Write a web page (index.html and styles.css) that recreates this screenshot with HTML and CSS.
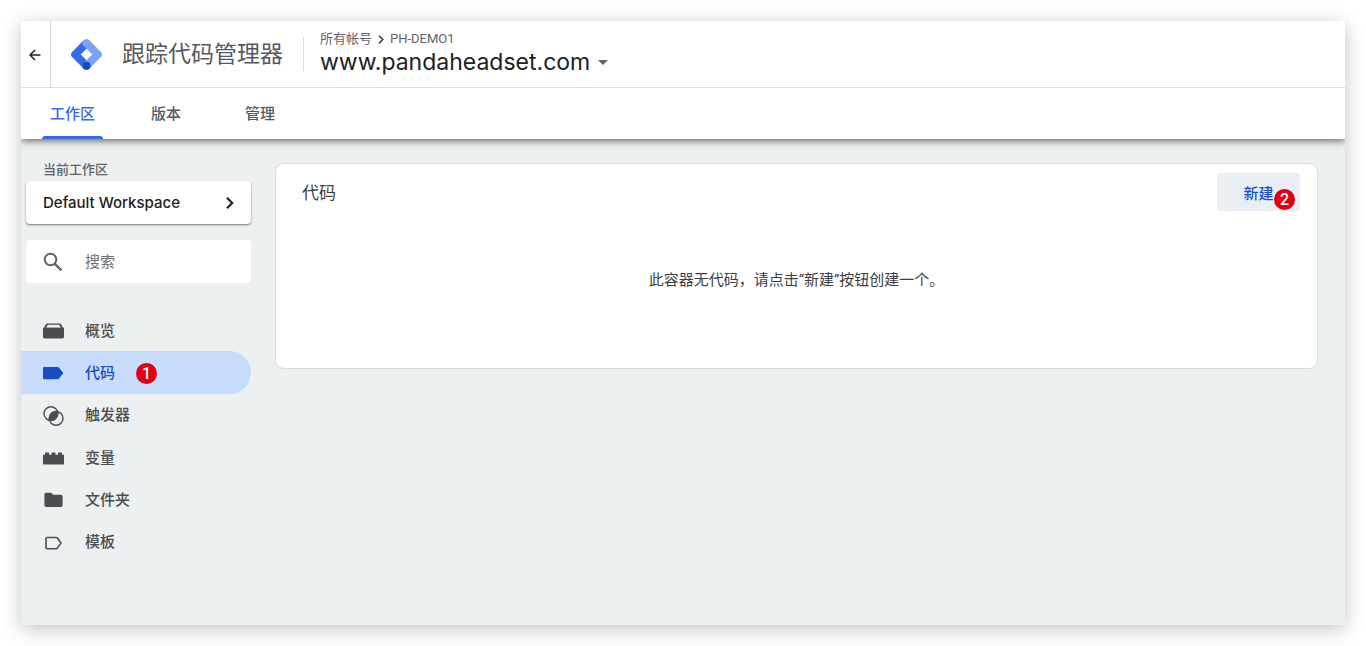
FILE: index.html
```
<!DOCTYPE html>
<html lang="zh-CN">
<head>
  <meta charset="UTF-8" />
  <title>跟踪代码管理器</title>
  <meta name="viewport" content="width=device-width, initial-scale=1.0" />
  <link rel="stylesheet" href="styles.css">
</head>
<body>

  <div class="app">
    <header class="header">
      <button class="back" type="button" aria-label="返回">
        <svg width="12" height="12" viewBox="0 0 12 12" fill="none" stroke="#202124" stroke-width="1.5"><path d="M11.5 6H1.2M6 1 1 6l5 5"/></svg>
      </button>
      <div class="brand">
        <svg class="logo" width="31" height="31" viewBox="0 0 32 32" fill="none" stroke-width="8.2" stroke-linejoin="round">
          <path d="M16 27.7 4.3 16 16 4.3" stroke="#356ae6"/>
          <path d="M16 4.3 27.7 16 16 27.7" stroke="#7ba2f3" stroke-linecap="round"/>
          <circle cx="16" cy="27.7" r="4.1" fill="#1a4bb8"/>
        </svg>
        <span class="brand-name">跟踪代码管理器</span>
      </div>
      <div class="container-info">
        <div class="crumbs">
          <a href="#">所有帐号</a>
          <svg width="6" height="9" viewBox="0 0 6 9" fill="none" stroke="#3c4043" stroke-width="1.6"><path d="M1 .8 4.8 4.5 1 8.2"/></svg>
          <a href="#">PH-DEMO1</a>
        </div>
        <button class="container-name" type="button">
          www.pandaheadset.com
          <svg width="10" height="5" viewBox="0 0 10 5"><path d="M0 0h10L5 5z" fill="#5f6368"/></svg>
        </button>
      </div>
    </header>

    <nav class="tabs">
      <a class="tab active" href="#">工作区</a>
      <a class="tab" href="#">版本</a>
      <a class="tab" href="#">管理</a>
    </nav>

    <div class="content">
      <aside class="sidebar">
        <div class="sidebar-label">当前工作区</div>
        <button class="workspace" type="button">
          Default Workspace
          <svg width="8" height="12" viewBox="0 0 8 12" fill="none" stroke="#202124" stroke-width="2.2"><path d="M1 .8 6.2 6 1 11.2"/></svg>
        </button>

        <label class="search">
          <svg width="20" height="20" viewBox="0 0 20 20" fill="none" stroke="#5f6368" stroke-width="2"><circle cx="7.5" cy="7.5" r="5.8"/><path d="m11.6 11.6 6.8 6.8" stroke-width="2.4"/></svg>
          <input type="text" placeholder="搜索" aria-label="搜索">
        </label>

        <ul class="menu">
          <li>
            <a class="menu-item" href="#">
              <svg width="21" height="20" viewBox="0 0 21 20"><path d="M4.4 2.4h12.2a2 2 0 0 1 1.8 1.2L20.4 8H.6l2-4.4a2 2 0 0 1 1.8-1.2zm.4 1.3L3.2 6.8h14.6l-1.6-3.1z" fill="#4a4d51" fill-rule="evenodd"/><path d="M0 6.8h21V16a1.4 1.4 0 0 1-1.4 1.4H1.4A1.4 1.4 0 0 1 0 16z" fill="#4a4d51"/></svg>
              概览
            </a>
          </li>
          <li>
            <a class="menu-item active" href="#">
              <svg width="21" height="20" viewBox="0 0 21 20"><path d="M1 4h13.6q.9 0 1.5.7l4.2 5.4-4.2 5.4q-.6.7-1.5.7H1a1 1 0 0 1-1-1V5a1 1 0 0 1 1-1z" fill="#174ec0"/></svg>
              代码
              <span class="badge">1</span>
            </a>
          </li>
          <li>
            <a class="menu-item" href="#">
              <svg width="21" height="20" viewBox="0 0 21 20"><g fill="none" stroke="#4a4d51" stroke-width="1.4"><circle cx="7.9" cy="7.6" r="6.9"/><circle cx="13.1" cy="12.4" r="6.9"/></g><path d="M14.6 5.8A6.9 6.9 0 0 1 6.4 14.3 6.9 6.9 0 0 1 14.6 5.8z" fill="#4a4d51" stroke="#4a4d51"/></svg>
              触发器
            </a>
          </li>
          <li>
            <a class="menu-item" href="#">
              <svg width="21" height="20" viewBox="0 0 21 20"><path d="M0 6.7h2V5.1q0-.7.7-.7h2.7q.7 0 .7.7v1.6h2.4V5.1q0-.7.7-.7h2.6q.7 0 .7.7v1.6h2.4V5.1q0-.7.7-.7h2.7q.7 0 .7.7v1.6h2v9.1q0 .7-.7.7H.7q-.7 0-.7-.7z" fill="#4a4d51"/></svg>
              变量
            </a>
          </li>
          <li>
            <a class="menu-item" href="#">
              <svg width="21" height="20" viewBox="0 0 21 20"><path d="M3.2 2.7h5l2 2h7.6a1.8 1.8 0 0 1 1.8 1.8v8.8a1.8 1.8 0 0 1-1.8 1.8H3.2a1.8 1.8 0 0 1-1.8-1.8V4.5a1.8 1.8 0 0 1 1.8-1.8z" fill="#4a4d51"/></svg>
              文件夹
            </a>
          </li>
          <li>
            <a class="menu-item" href="#">
              <svg width="21" height="20" viewBox="0 0 21 20"><path d="M4 4.5h9.2q.7 0 1.2.6l3.6 5-3.6 5q-.5.6-1.2.6H4a1 1 0 0 1-1-1V5.5a1 1 0 0 1 1-1z" fill="none" stroke="#4a4d51" stroke-width="1.6"/></svg>
              模板
            </a>
          </li>
        </ul>
      </aside>

      <main class="card">
        <div class="card-header">
          <h1>代码</h1>
          <button class="new" type="button">新建<span class="badge">2</span></button>
        </div>
        <p class="empty">此容器无代码，请点击“新建”按钮创建一个。</p>
      </main>
    </div>
  </div>

</body>
</html>
```
FILE: styles.css
```
* {
  box-sizing: border-box;
}

body {
  margin: 0;
  padding: 21px;
  background: #fff;
  color: #3c4043;
  font-family: Roboto, "Noto Sans CJK SC", sans-serif;
  font-size: 15px;
}

a {
  color: inherit;
  text-decoration: none;
}

button {
  border: 0;
  padding: 0;
  background: none;
  color: inherit;
  font: inherit;
  cursor: pointer;
}

svg {
  display: block;
  flex-shrink: 0;
}

.app {
  display: flex;
  flex-direction: column;
  min-height: calc(100vh - 42px);
  border-radius: 2px;
  background: #ecf0f1;
  box-shadow: 0 4px 20px rgba(0, 0, 0, 0.24);
}

/* header */
.header {
  display: flex;
  align-items: center;
  height: 67px;
  border-bottom: 1px solid #dadce0;
  background: #fff;
}

.back {
  display: flex;
  align-items: center;
  justify-content: center;
  align-self: stretch;
  width: 30px;
  padding-right: 2px;
  padding-top: 2px;
  border-right: 1px solid #dadce0;
}

.brand {
  display: flex;
  align-items: center;
  gap: 20px;
  height: 34px;
  padding-left: 20px;
  padding-right: 20px;
  border-right: 1px solid #dadce0;
}

.brand-name {
  padding-top: 2px;
  color: #55585c;
  font-size: 23px;
  line-height: 32px;
}

.container-info {
  padding-left: 16px;
  padding-bottom: 4px;
}

.crumbs {
  display: flex;
  align-items: center;
  gap: 6px;
  color: #5f6368;
  font-size: 13px;
  line-height: 20px;
}

.container-name {
  display: flex;
  align-items: center;
  gap: 8px;
  color: #202124;
  font-family: Inter, sans-serif;
  font-size: 23px;
  line-height: 26px;
}

/* tabs */
.tabs {
  display: flex;
  gap: 32px;
  position: relative;
  height: 51px;
  padding-left: 21px;
  background: #fff;
  box-shadow: 0 1px 8px rgba(0, 0, 0, 0.7);
  clip-path: inset(0 0 -12px 0);
}

.tab {
  display: flex;
  align-items: center;
  padding: 0 16px 2px;
  color: #55585c;
  font-weight: 500;
}

.tab.active {
  position: relative;
  padding: 0 8px 2px;
  color: #356ae6;
}

.tab.active::after {
  content: "";
  position: absolute;
  left: 0;
  right: 0;
  bottom: 0;
  height: 3px;
  border-radius: 3px 3px 0 0;
  background: #356ae6;
}

.content {
  display: flex;
  align-items: flex-start;
  gap: 24px;
  padding: 20px 27px 24px 0;
}

/* sidebar */
.sidebar {
  width: 230px;
  flex-shrink: 0;
}

.sidebar-label {
  padding-left: 22px;
  color: #5f6368;
  font-size: 13px;
  font-weight: 500;
  line-height: 22px;
}

.workspace,
.search {
  display: flex;
  align-items: center;
  width: 225px;
  height: 43px;
  margin-left: 5px;
  padding: 0 17px;
  border-radius: 4px;
  background: #fff;
}

.workspace {
  justify-content: space-between;
  box-shadow: 0 1px 2px rgba(0, 0, 0, 0.5);
  color: #202124;
  font-family: Inter, sans-serif;
  font-weight: 500;
}

.search {
  gap: 22px;
  margin-top: 16px;
}

.search input {
  width: 100%;
  padding: 0;
  border: 0;
  outline: 0;
  background: none;
  color: #3c4043;
  font: inherit;
}

.search input::placeholder {
  color: #6b6e72;
}

.menu {
  display: grid;
  grid-auto-rows: 1fr;
  height: 254px;
  margin: 26px 0 0;
  padding: 0;
  list-style: none;
}

.menu-item {
  display: flex;
  align-items: center;
  gap: 21px;
  height: 100%;
  padding-left: 22px;
  padding-bottom: 2px;
  border-radius: 0 21px 21px 0;
  color: #4a4d51;
  font-weight: 500;
}

.menu-item svg,
.menu-item .badge {
  margin-top: 4px;
}

.menu-item.active {
  background: #c8dcfc;
  color: #174ec0;
}

.badge {
  width: 21px;
  height: 21px;
  border-radius: 50%;
  background: #e00012;
  color: #fff;
  font-family: Roboto, sans-serif;
  font-size: 16px;
  font-weight: 500;
  line-height: 21px;
  text-align: center;
}

/* card */
.card {
  flex: 1;
  min-height: 206px;
  margin-top: 4px;
  border: 1px solid #dadce0;
  border-radius: 9px;
  background: #fff;
}

.card-header {
  display: flex;
  align-items: center;
  justify-content: space-between;
  padding: 9px 17px 0 26px;
}

.card h1 {
  margin: 0;
  padding-bottom: 2px;
  font-size: 17px;
  font-weight: 400;
}

.new {
  position: relative;
  width: 83px;
  height: 38px;
  border-radius: 4px;
  background: #e8eef4;
  color: #174ed0;
  font-weight: 500;
}

.new .badge {
  position: absolute;
  right: 5px;
  bottom: 1px;
}

.empty {
  margin: 57px 0 0;
  text-align: center;
  line-height: 24px;
}
```
